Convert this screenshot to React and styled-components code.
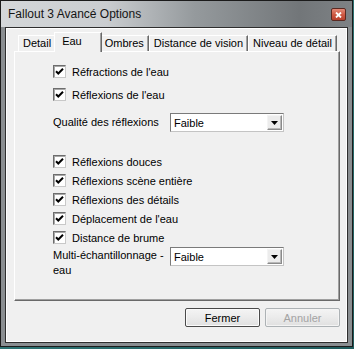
import React from 'react';
import styled, {createGlobalStyle} from 'styled-components';

const GlobalStyle = createGlobalStyle`
  html, body {
    margin: 0;
    padding: 0;
  }
  body {
    width: 354px;
    height: 349px;
    overflow: hidden;
    background: linear-gradient(135deg, #3d8c8a 0%, #1f5b5c 100%);
    font-family: "Liberation Sans", Arial, sans-serif;
  }
`;

const Window = styled.div`
  width: 353px;
  height: 347px;
  box-sizing: border-box;
  border: 1px solid #1b1b1b;
  display: flex;
  flex-direction: column;
  background: #8a8e91;
`;

const TitleBar = styled.div`
  height: 26px;
  flex: none;
  display: flex;
  align-items: center;
  padding: 0 6px 0 7px;
  background: linear-gradient(to right, #d4d7d9 0%, #cacdd0 30%, #959a9d 55%, #727679 85%, #7e8285 100%);
`;

const Title = styled.span`
  font-size: 12px;
  color: #151515;
  flex: 1;
`;

const CloseButton = styled.div`
  width: 15px;
  height: 13px;
  box-sizing: border-box;
  border: 1px solid #5a2a22;
  border-radius: 2px;
  background: linear-gradient(to bottom, #e48a78 0%, #cf5a44 50%, #b8402c 100%);
  display: flex;
  align-items: center;
  justify-content: center;
  margin-top: 1px;
`;

const Frame = styled.div`
  flex: 1;
  display: flex;
  padding: 0 4px 3px;
  min-height: 0;
`;

const Client = styled.div`
  flex: 1;
  border: 1px solid #2e2e2e;
  box-shadow: inset 0 0 0 1px #ffffff;
  background: #f0f0f0;
  padding: 4px 7px 0 8px;
  display: flex;
  flex-direction: column;
  font-size: 11px;
  color: #000;
`;

const TabRow = styled.div`
  display: flex;
  align-items: flex-end;
  padding-left: 4px;
  position: relative;
  z-index: 1;
`;

const Tab = styled.div`
  box-sizing: border-box;
  height: ${p => (p.$active ? 20 : 16)}px;
  margin: ${p => (p.$active ? '0 -2px -1px' : '0')};
  padding: ${p => (p.$active ? '0 19px 3px 7px' : '0 4px 1px')};
  display: flex;
  align-items: center;
  border-top: 1px solid #fff;
  border-left: 1px solid #fff;
  border-right: 1px solid #696969;
  box-shadow: inset -1px 0 0 #a0a0a0;
  background: #f0f0f0;
  white-space: nowrap;
  position: relative;
  z-index: ${p => (p.$active ? 2 : 1)};
`;

const Panel = styled.div`
  height: 250px;
  box-sizing: border-box;
  border-top: 1px solid #fff;
  border-left: 1px solid #fff;
  border-right: 1px solid #696969;
  border-bottom: 1px solid #696969;
  box-shadow: inset -1px -1px 0 #a0a0a0;
  padding: 10px 0 0 38px;
  display: flex;
  flex-direction: column;
`;

const CheckRow = styled.label`
  height: 19px;
  display: flex;
  align-items: center;
  gap: 6px;
  margin-top: ${p => p.$gap || 0}px;
`;

const Box = styled.span`
  width: 13px;
  height: 13px;
  box-sizing: border-box;
  flex: none;
  background: #fff;
  border-top: 1px solid #6d6d6d;
  border-left: 1px solid #6d6d6d;
  border-right: 1px solid #c8c8c8;
  border-bottom: 1px solid #c8c8c8;
  box-shadow: inset 1px 1px 0 #a8a8a8;
  display: flex;
  align-items: center;
  justify-content: center;
`;

const FieldRow = styled.div`
  display: flex;
  align-items: ${p => (p.$top ? 'flex-start' : 'center')};
  margin-top: ${p => p.$gap || 0}px;
`;

const FieldLabel = styled.span`
  width: 117px;
  flex: none;
  line-height: 15px;
  padding-top: ${p => (p.$top ? 1 : 0)}px;
`;

const Combo = styled.div`
  width: 114px;
  height: 19px;
  box-sizing: border-box;
  background: #fff;
  border-top: 1px solid #7a7a7a;
  border-left: 1px solid #7a7a7a;
  border-right: 1px solid #c4c4c4;
  border-bottom: 1px solid #c4c4c4;
  display: flex;
  align-items: center;
  padding: 1px 1px 1px 3px;
`;

const ComboText = styled.span`
  flex: 1;
`;

const DropButton = styled.span`
  width: 15px;
  height: 15px;
  box-sizing: border-box;
  background: #ececec;
  border: 1px solid #8a8a8a;
  border-top-color: #f4f4f4;
  border-left-color: #f4f4f4;
  box-shadow: inset -1px -1px 0 #b8b8b8;
  display: flex;
  align-items: center;
  justify-content: center;
`;

const ButtonRow = styled.div`
  display: flex;
  justify-content: flex-end;
  gap: 5px;
  margin-top: 7px;
`;

const Button = styled.button`
  width: 75px;
  height: 19px;
  box-sizing: border-box;
  font-family: inherit;
  font-size: 11px;
  padding: 0;
  border-radius: 2px;
  border: 1px solid ${p => (p.disabled ? '#adb2b5' : '#4a4a4a')};
  background: linear-gradient(to bottom, #f4f4f4 0%, #ebebeb 50%, #e0e0e0 100%);
  box-shadow: inset 0 0 0 1px ${p => (p.disabled ? '#f4f4f4' : '#fbfbfb')};
  color: ${p => (p.disabled ? '#a3a3a3' : '#000')};
`;

const Check = ({label, gap}) => (
    <CheckRow $gap={gap}>
        <Box>
            <svg width="9" height="9" viewBox="0 0 9 9">
                <path d="M1 4.2 L3.3 6.5 L8 1.8" stroke="#000" strokeWidth="2" fill="none"/>
            </svg>
        </Box>
        {label}
    </CheckRow>
);

const Select = ({value}) => (
    <Combo>
        <ComboText>{value}</ComboText>
        <DropButton>
            <svg width="7" height="4" viewBox="0 0 7 4">
                <path d="M0 0 H7 L3.5 4 Z" fill="#000"/>
            </svg>
        </DropButton>
    </Combo>
);

const tabs = ['Detail', 'Eau', 'Ombres', 'Distance de vision', 'Niveau de détail'];

export default function App() {
    return (
        <>
            <GlobalStyle/>
            <Window>
                <TitleBar>
                    <Title>Fallout 3 Avancé Options</Title>
                    <CloseButton>
                        <svg width="7" height="6" viewBox="0 0 7 6">
                            <path d="M1 0.5 L6 5.5 M6 0.5 L1 5.5" stroke="#fff" strokeWidth="1.8"/>
                        </svg>
                    </CloseButton>
                </TitleBar>
                <Frame>
                    <Client>
                        <TabRow>
                            {tabs.map(t => (
                                <Tab key={t} $active={t === 'Eau'}>{t}</Tab>
                            ))}
                        </TabRow>
                        <Panel>
                            <Check label="Réfractions de l'eau"/>
                            <Check label="Réflexions de l'eau" gap={4}/>
                            <FieldRow $gap={9}>
                                <FieldLabel>Qualité des réflexions</FieldLabel>
                                <Select value="Faible"/>
                            </FieldRow>
                            <Check label="Réflexions douces" gap={20}/>
                            <Check label="Réflexions scène entière"/>
                            <Check label="Réflexions des détails"/>
                            <Check label="Déplacement de l'eau"/>
                            <Check label="Distance de brume"/>
                            <FieldRow $top>
                                <FieldLabel $top>Multi-échantillonnage - eau</FieldLabel>
                                <Select value="Faible"/>
                            </FieldRow>
                        </Panel>
                        <ButtonRow>
                            <Button>Fermer</Button>
                            <Button disabled>Annuler</Button>
                        </ButtonRow>
                    </Client>
                </Frame>
            </Window>
        </>
    );
}
